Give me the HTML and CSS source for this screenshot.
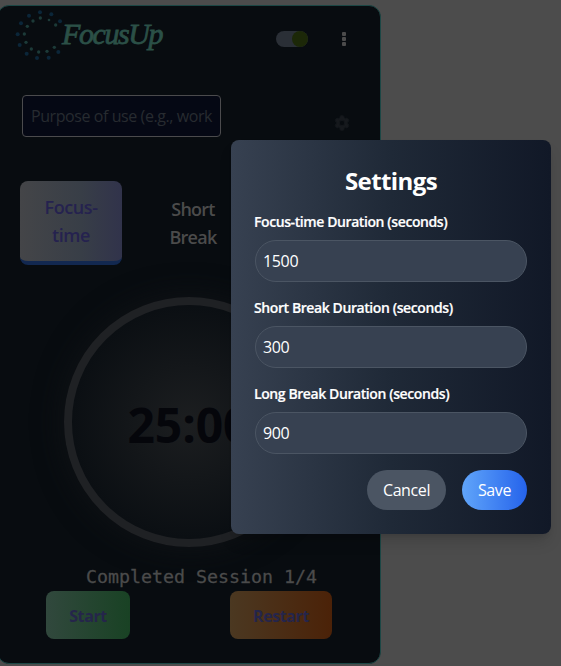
FILE: index.html
```html
<!DOCTYPE html>
<html lang="en">
<head>
<meta charset="utf-8">
<title>FocusUp</title>
<link rel="stylesheet" href="styles.css">
</head>
<body>
<main class="card">
  <header class="header">
    <div class="brand">
      <svg class="brand-mark" width="48" height="51" viewBox="0 0 144 153">
        <g fill="#0b2639"><circle cx="8" cy="76" r="6"/><circle cx="18" cy="43" r="6"/><circle cx="42" cy="20" r="6"/><circle cx="75" cy="10" r="6"/><circle cx="109" cy="16" r="6"/><circle cx="135" cy="37" r="6"/><circle cx="14" cy="108" r="6"/><circle cx="35" cy="134" r="6"/><circle cx="66" cy="147" r="6"/><circle cx="101" cy="146" r="6"/><circle cx="130" cy="129" r="6"/></g>
        <g fill="#1c3a38"><circle cx="28" cy="75" r="5"/><circle cx="37" cy="52" r="5"/><circle cx="54" cy="36" r="5"/><circle cx="76" cy="27" r="5"/><circle cx="102" cy="33" r="4"/><circle cx="122" cy="48" r="5"/><circle cx="33" cy="100" r="5"/><circle cx="49" cy="120" r="5"/><circle cx="71" cy="129" r="5"/><circle cx="96" cy="127" r="5"/><circle cx="118" cy="115" r="5"/></g>
      </svg>
      <span class="brand-name">FocusUp</span>
    </div>
    <div class="toggle"><span class="knob"></span></div>
    <div class="menu"><i></i><i></i><i></i></div>
  </header>
  <div class="purpose-row">
    <div class="purpose">Purpose of use (e.g., work</div>
    <svg class="gear" width="18" height="18" viewBox="0 0 24 24"><path fill="#16191d" stroke="#16191d" d="M19.14 12.94c.04-.3.06-.61.06-.94 0-.32-.02-.64-.07-.94l2.03-1.58a.49.49 0 0 0 .12-.61l-1.92-3.32a.49.49 0 0 0-.59-.22l-2.39.96c-.5-.38-1.03-.7-1.62-.94l-.36-2.54a.48.48 0 0 0-.48-.41h-3.84a.47.47 0 0 0-.47.41l-.36 2.54c-.59.24-1.13.57-1.62.94l-2.39-.96a.48.48 0 0 0-.59.22L2.74 8.87a.48.48 0 0 0 .12.61l2.03 1.58c-.05.3-.09.63-.09.94s.02.64.07.94l-2.03 1.58a.49.49 0 0 0-.12.61l1.92 3.32c.12.22.37.29.59.22l2.39-.96c.5.38 1.03.7 1.62.94l.36 2.54c.05.24.24.41.48.41h3.84c.24 0 .44-.17.47-.41l.36-2.54c.59-.24 1.13-.56 1.62-.94l2.39.96c.22.08.47 0 .59-.22l1.92-3.32a.48.48 0 0 0-.12-.61zM12 15.6A3.6 3.6 0 1 1 12 8.4a3.6 3.6 0 0 1 0 7.2z"/></svg>
  </div>
  <nav class="tabs">
    <div class="tab active">Focus-<br>time</div>
    <div class="tab">Short<br>Break</div>
  </nav>
  <div class="timer"><span>25:00</span></div>
  <p class="session">Completed Session 1/4</p>
  <div class="controls">
    <button class="control start">Start</button>
    <button class="control restart">Restart</button>
  </div>
</main>
<section class="modal">
  <h2>Settings</h2>
  <label><span>Focus-time Duration (seconds)</span><input type="text" value="1500"></label>
  <label><span>Short Break Duration (seconds)</span><input type="text" value="300"></label>
  <label><span>Long Break Duration (seconds)</span><input type="text" value="900"></label>
  <div class="actions">
    <button class="cancel">Cancel</button>
    <button class="save">Save</button>
  </div>
</section>
</body>
</html>
```
FILE: styles.css
```css
* { box-sizing: border-box; }
html { height: 100%; overflow: hidden; }
body {
  margin: 0;
  height: 666px;
  padding-top: 5px;
  overflow: hidden;
  position: relative;
  background: #4c4c4c;
  font-family: "Open Sans", "Noto Sans", sans-serif;
  font-size: 16px;
}
button, input { font: inherit; border: 0; margin: 0; }
.card {
  width: 384px;
  height: 659px;
  margin-left: -3px;
  border: 1px solid #1c4745;
  border-radius: 12px;
  background: #080c10;
  overflow: hidden;
}
.header { display: flex; height: 66px; padding-left: 17px; }
.brand { display: flex; width: 261px; padding-top: 3px; }
.brand-name {
  margin: 7px 0 0 -1px;
  font: italic 30px/36px "Liberation Serif", serif;
  -webkit-text-stroke: .8px #2b5047;
  letter-spacing: -1.4px;
  color: #2b5047;
}
.toggle {
  width: 32px;
  height: 16px;
  margin-top: 25px;
  border-radius: 8px;
  background: #2a2f36;
  display: flex;
  justify-content: flex-end;
}
.knob { width: 16px; height: 16px; border-radius: 50%; background: #1c2808; }
.menu { display: flex; flex-direction: column; gap: 1px; margin: 26px 0 0 34px; }
.menu i { width: 4px; height: 4px; border-radius: 1px; background: #4b4b4b; }
.purpose-row { display: flex; padding: 23px 0 0 24px; }
.purpose {
  width: 199px;
  height: 42px;
  border: 1px solid #4b4b4d;
  border-radius: 4px;
  background: #050814;
  color: #272b30;
  padding: 0 8px;
  line-height: 41px;
  white-space: nowrap;
  letter-spacing: -.42px;
}
.gear { margin: 19px 0 0 112px; }
.tabs { display: flex; gap: 20px; padding: 44px 0 0 22px; }
.tab {
  width: 102px;
  height: 84px;
  padding-top: 14px;
  font-size: 18px;
  font-weight: 600;
  line-height: 28px;
  letter-spacing: -.75px;
  text-align: center;
  color: #4b4b4b;
}
.tab.active {
  padding-top: 12px;
  letter-spacing: -.4px;
  color: #25224f;
  border-bottom: 4px solid #122850;
  border-radius: 8px;
  background: linear-gradient(90deg, #444548, #383e47 60%, #31334b);
}
.timer {
  width: 250px;
  height: 250px;
  margin: 32px 0 0 66px;
  border: 8px solid #1f2124;
  border-radius: 50%;
  background: radial-gradient(circle, #1c1e20 0%, #0b0f13 70%);
  box-shadow: 0 0 30px #101316;
  display: flex;
  align-items: center;
  justify-content: center;
  font-size: 48px;
  font-weight: 700;
  line-height: 48px;
  letter-spacing: -.1px;
  color: #05060b;
}
.timer span { padding-top: 5px; }
.session {
  margin: 16px 0 0 88px;
  font: 18.27px/28px "DejaVu Sans Mono", monospace;
  -webkit-text-stroke: .3px #4b4b4b;
  color: #4b4b4b;
  white-space: nowrap;
}
.controls { display: flex; gap: 100px; padding-left: 48px; }
.control {
  width: 84px;
  height: 48px;
  padding: 1px 0 0;
  border-radius: 8px;
  font-weight: 700;
  letter-spacing: -.4px;
  color: #25254b;
}
.start { background: linear-gradient(90deg, #31483d, #194224); }
.restart { width: 102px; background: linear-gradient(90deg, #4b3821, #4b2208); }
.modal {
  position: absolute;
  left: 231px;
  top: 140px;
  width: 320px;
  height: 394px;
  padding: 24px;
  border-radius: 8px;
  background: linear-gradient(90deg, #374151, #1f2937 50%, #111827);
  box-shadow: 0 10px 15px -3px rgba(0,0,0,.15), 0 4px 6px -4px rgba(0,0,0,.15);
  color: #fff;
}
.modal h2 {
  margin: 0 0 16px;
  padding-top: 1px;
  height: 32px;
  font-size: 24px;
  line-height: 32px;
  text-align: center;
  letter-spacing: -.6px;
}
.modal label { display: block; margin-bottom: 16px; }
.modal label span {
  display: block;
  height: 20px;
  margin: 0 0 8px -1px;
  font-size: 14px;
  font-weight: 600;
  line-height: 20px;
  letter-spacing: -.41px;
  -webkit-text-stroke: .2px #fff;
  white-space: nowrap;
}
.modal input {
  display: block;
  width: 272px;
  height: 42px;
  padding: 0 7px;
  border: 1px solid #4b5563;
  border-radius: 21px;
  background: #374151;
  color: #fff;
  letter-spacing: -.35px;
}
.actions { display: flex; justify-content: flex-end; gap: 16px; }
.actions button {
  height: 40px;
  padding: 0;
  border-radius: 20px;
  color: #fff;
  letter-spacing: -.4px;
}
.cancel { width: 79px; background: #4b5563; }
.save { width: 65px; background: linear-gradient(90deg, #60a5fa, #2563eb); }
```
